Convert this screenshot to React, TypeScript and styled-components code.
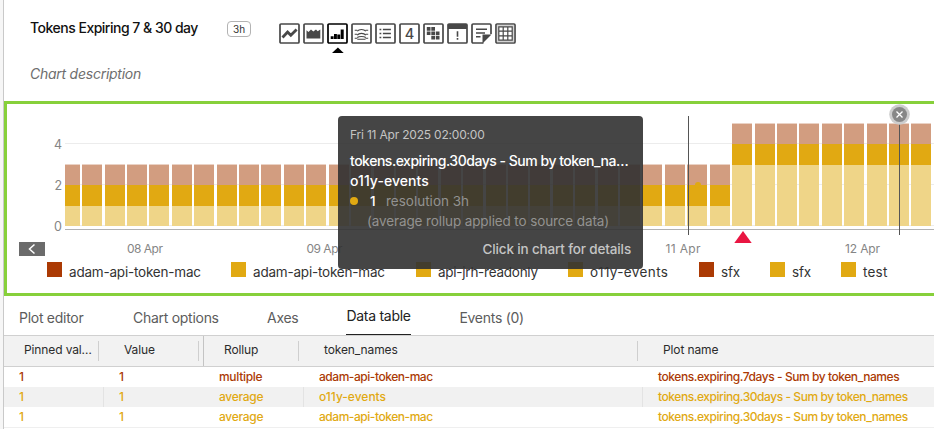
import React from "react";
import styled, { createGlobalStyle, css } from "styled-components";

const GOLD = "#e1a912";
const RUST = "#ab3a04";

const GlobalStyle = createGlobalStyle`
  * { box-sizing: border-box; }
  body { margin: 0; overflow: hidden; background: #fff; font-family: Inter, "Open Sans", sans-serif; }
`;

const Page = styled.div`
  width: 934px;
  height: 429px;
  overflow: hidden;
  padding-left: 3px;
  background: #f6f6f6;
`;

const Main = styled.main`
  height: 100%;
  display: flex;
  flex-direction: column;
  background: #fff;
  border-left: 1px solid #c9c9c9;
`;

const Header = styled.header`
  flex: 0 0 101px;
  padding: 18px 26px 0;
`;

const TitleRow = styled.div`
  display: flex;
  align-items: flex-start;
  height: 46px;
`;

const Title = styled.h1`
  margin: 0;
  width: 197px;
  font-size: 14px;
  line-height: 19px;
  font-weight: 500;
  letter-spacing: -0.5px;
  color: #111;
  white-space: nowrap;
`;

const Resolution = styled.span`
  width: 24px;
  height: 16px;
  margin-top: 3px;
  border: 1px solid #b3b3b3;
  border-radius: 4px;
  font-size: 10px;
  line-height: 15px;
  text-align: center;
  color: #333;
`;

const ChartTypes = styled.div`
  display: flex;
  gap: 3px;
  margin: 5px 0 0 28px;
`;

const TypeButton = styled.button<{ $active?: boolean }>`
  width: 21px;
  height: 31px;
  padding: 0;
  border: 0;
  background: none;
  font-family: Inter, sans-serif;
  color: ${(p) => (p.$active ? "#000" : "#484848")};
  svg { display: block; }
`;

const Description = styled.p`
  margin: 0;
  font-size: 14px;
  line-height: 20px;
  font-style: italic;
  letter-spacing: -0.25px;
  color: #6e6e6e;
`;

const ChartPanel = styled.section`
  position: relative;
  flex: 0 0 195px;
  border: 3px solid #87d03b;
  border-right: 0;
`;

const Plot = styled.svg`
  display: block;
  width: 927px;
  height: 156px;
  font-family: Inter, sans-serif;
`;

const Legend = styled.ul`
  display: flex;
  margin: 0;
  padding: 2px 0 0 40px;
  list-style: none;
`;

const LegendItem = styled.li<{ $w: number; $ls?: number }>`
  flex: 0 0 ${(p) => p.$w}px;
  display: flex;
  gap: 7px;
  font-size: 13.5px;
  line-height: 20px;
  letter-spacing: ${(p) => p.$ls ?? -0.2}px;
  color: #333;
  white-space: nowrap;
`;

const Swatch = styled.i<{ $c: string }>`
  width: 15px;
  height: 15px;
  background: ${(p) => p.$c};
`;

const Tooltip = styled.div`
  position: absolute;
  left: 331px;
  top: 12px;
  width: 305px;
  height: 153px;
  padding: 9px 12px;
  border-radius: 4px;
  background: rgba(49, 49, 49, 0.9);
  color: #fff;
  white-space: nowrap;
`;

const TipTime = styled.div`
  font-size: 12px;
  line-height: 20px;
  letter-spacing: -0.2px;
  color: #c4c4c4;
`;

const TipName = styled.div<{ $ls: number }>`
  font-size: 14px;
  line-height: 20px;
  font-weight: 500;
  letter-spacing: ${(p) => p.$ls}px;
`;

const TipNames = styled.div`
  margin-top: 6px;
`;

const TipValue = styled.div`
  display: flex;
  align-items: center;
  font-size: 13.5px;
  line-height: 20px;
  color: #929292;
  b { width: 16px; margin-left: 12px; font-weight: 500; color: #fff; }
`;

const Dot = styled.i`
  width: 8px;
  height: 8px;
  border-radius: 50%;
  background: ${GOLD};
`;

const TipNote = styled.div`
  padding-left: 17px;
  font-size: 13.5px;
  line-height: 20px;
  letter-spacing: -0.12px;
  color: #929292;
`;

const TipHint = styled.div`
  margin-top: 8px;
  text-align: right;
  font-size: 13.5px;
  line-height: 20px;
  font-weight: 500;
  letter-spacing: -0.15px;
  color: #c4c4c4;
`;

const Tabs = styled.nav`
  flex: 0 0 40px;
  display: flex;
  padding-left: 15px;
  border-bottom: 1px solid #d0d0d0;
`;

const Tab = styled.button<{ $w: number; $gap: number; $active?: boolean }>`
  flex: 0 0 ${(p) => p.$w}px;
  margin-right: ${(p) => p.$gap}px;
  height: 39px;
  padding: 3px 0 0;
  border: 0;
  background: none;
  font: 400 14px/38px Inter, sans-serif;
  letter-spacing: -0.28px;
  text-align: left;
  white-space: nowrap;
  color: #5c5c5c;
  ${(p) => p.$active && css`
    padding-top: 2px;
    line-height: 36px;
    color: #222;
    border-bottom: 1px solid #222;
  `}
`;

const columns = "100px 100px 100px 339px 1fr";

const HeadRow = styled.div`
  flex: 0 0 31px;
  display: grid;
  grid-template-columns: ${columns};
  background: #f2f2f2;
  border-bottom: 1px solid #d0d0d0;
`;

const HeadCell = styled.div<{ $divider?: boolean; $group?: boolean }>`
  display: flex;
  margin: 0 5px 0 0;
  padding-left: 20px;
  height: 30px;
  font-size: 12px;
  line-height: 28px;
  letter-spacing: -0.12px;
  color: #2b2b2b;
  white-space: nowrap;
  ${(p) => p.$divider && css`
    &::after { content: ""; width: 1px; height: 20px; margin: 5px 0 0 auto; background: #cfcfcf; }
  `}
  ${(p) => p.$group && css`
    margin-right: 0;
    padding-right: 4px;
    border-right: 1px solid #c4c4c4;
  `}
`;

const DataRow = styled.div<{ $c: string; $shade?: boolean }>`
  flex: 0 0 20px;
  height: 20px;
  display: grid;
  grid-template-columns: ${columns};
  background: ${(p) => (p.$shade ? "#f1f1f1" : "#fff")};
  color: ${(p) => p.$c};
`;

const TableEnd = styled.div`
  flex: 0 0 1px;
  background: #efefef;
`;

const Cell = styled.div<{ $line?: boolean; $ls?: number }>`
  padding-left: 15px;
  height: 20px;
  font-size: 12px;
  line-height: 20px;
  font-weight: 500;
  letter-spacing: ${(p) => p.$ls ?? -0.3}px;
  white-space: nowrap;
  border-right: 1px solid ${(p) => (p.$line ? "#e3e3e3" : "transparent")};
`;

const icons: React.ReactNode[] = [
  <path d="M3.5 14.5 8.6 9l3.2 3.2 5.8-5.8" fill="none" stroke="currentColor" strokeWidth="2.8" />,
  <path d="M3.5 15.5V7.3l2 1.7L8 6.5l2.3 2 2.7-2 1.700 1.800L17.300 6.500v9z" fill="currentColor" />,
  <path d="M3.700 13.200h2.900v2.900H3.700zM7 11h2.900v5.100H7zM10.300 11.500h2.900v4.600h-2.900zM13.700 6.500h3v9.600h-3z" fill="currentColor" />,
  <path d="M3.700 7.200h2.600M3.700 11.300h2.600M3.700 15.300h2.600M14.500 7.200h2.700M14.500 11.300h2.700M14.500 15.300h2.700M6.300 8.300q1.200-1.800 4.200-1.800t4.200 1.800M6.300 12.200q1.200-1.800 4.200-1.800t4.200 1.800M6.300 14.500q1.200-1 4.200-1t4.200 1M6.300 16.200h8.200" fill="none" stroke="currentColor" strokeWidth="1.1" />,
  <path d="M4.500 6.500h1.800M4.500 10.500h1.800M4.500 14.500h1.800M7.900 6.500h8M7.900 10.500h8M7.900 14.500h8" stroke="currentColor" strokeWidth="1.300" />,
  <text x="10.500" y="15.500" textAnchor="middle" fontSize="14.500" fontWeight="500" fill="currentColor">4</text>,
  <path d="M3.800 4h3.700v3.700H3.800zM8.300 4H12v3.700H8.300zM3.800 8.400h3.700v3.700H3.800zM8.300 8.400H12v3.700H8.300zM12.800 8.400h3.700v3.700h-3.700zM8.300 12.800H12v3.700H8.300zM12.800 12.800h3.700v3.700h-3.700z" fill="currentColor" />,
  <path d="M1 1h19v5H1zM9.700 8.200h1.600v5.600H9.700zM9.700 15h1.600v1.700H9.700z" fill="currentColor" />,
  <path d="M5 6.200h11M5 10h9M5 13.800h4.500" fill="none" stroke="currentColor" strokeWidth="1.400" />,
  <>
    <path d="M1.900 1.900h17.200v17.200H1.900z" fill="#d4d4d4" />
    <path d="M3.800 3.800h13.400v13.400H3.800z" fill="#fff" />
    <path d="M3.800 3.800h13.400v13.400H3.800zM8.200 3.800v13.400M12.800 3.800v13.400M3.800 8.200h13.400M3.800 12.800h13.400" fill="none" stroke="currentColor" strokeWidth="1.200" />
  </>,
];

const ChartTypeIcon = ({ index }: { index: number }) => (
  <svg width="21" height="31" viewBox="0 0 21 31">
    {index === 8 ? (
      <>
        <path d="M12.500 20H2.200Q1 20 1 18.800V2.200Q1 1 2.200 1h16.600Q20 1 20 2.200V11" fill="none" stroke="currentColor" strokeWidth="1.700" />
        <path d="M11.500 20.500V11.500h9z" fill="currentColor" />
      </>
    ) : (
      <rect x="1" y="1" width="19" height="19" rx="1" fill="none" stroke="currentColor" strokeWidth="1.700" />
    )}
    {icons[index]}
    {index === 2 && <path d="M10.900 24.500 16.700 30H5z" fill="currentColor" />}
  </svg>
);

const bars = Array.from({ length: 39 }, (_, i) => {
  const x = i === 0 ? 65 : Math.floor(82.7 + 22.41 * (i - 1));
  return { x, w: i === 0 ? 15 : 20, base: i >= 30 ? 3 : 1 };
});
const level = [226, 206, 185, 165, 144, 124];

const dates = [
  { x: 127, label: "08 Apr", w: 36 },
  { x: 306.5, label: "09 Apr", w: 36 },
  { x: 486, label: "10 Apr", w: 35 },
  { x: 665.5, label: "11 Apr", w: 35 },
  { x: 845, label: "12 Apr", w: 35 },
];

const PlotArea = () => (
  <Plot viewBox="7 104 927 156">
    <path d="M65 143.5H934M65 184.5H934M65 225.5H934" stroke="#ececec" />
    {bars.map(({ x, w, base }) => (
      <g key={x}>
        <rect x={x} y={level[base + 2] - 1} width={w} height="1" fill="#ead2c5" />
        <rect x={x} y={level[base + 2]} width={w} height={level[base + 1] - level[base + 2]} fill="#d29d80" />
        <rect x={x} y={level[base + 1]} width={w} height={level[base] - level[base + 1]} fill={GOLD} />
        <rect x={x} y={level[base]} width={w} height={level[0] - level[base]} fill="#efd588" />
      </g>
    ))}
    <path d="M65 229.5H934" stroke="#b2b2b2" />
    <circle cx="698" cy="185" r="3" fill={GOLD} />
    <path d="M688.5 116v119M899.5 120v115" stroke="#555" />
    <circle cx="899.5" cy="114.5" r="10.3" fill="#cdcdcd" />
    <circle cx="899.5" cy="114.5" r="7.5" fill="#878787" />
    <path d="m896.5 111.5 6 6m0-6-6 6" stroke="#fff" strokeWidth="1.3" />
    <path d="M743 231l8.700 12h-17.400z" fill="#e91642" />
    <g fontSize="12.5" fill="#858585" textAnchor="end">
      <text x="62" y="149">4</text>
      <text x="62" y="190">2</text>
      <text x="62" y="231">0</text>
    </g>
    <g fontSize="12" fill="#858585">
      {dates.map((d) => (
        <text key={d.label} x={d.x} y="253" textLength={d.w}>{d.label}</text>
      ))}
    </g>
    <path d="M19 242h26v14H19z" fill="#6b6b6b" />
    <path d="m34.500 244.500-5 4.500 5 4.500" fill="none" stroke="#fff" strokeWidth="1.500" />
  </Plot>
);

const series = [
  { label: "adam-api-token-mac", c: RUST, w: 184 },
  { label: "adam-api-token-mac", c: GOLD, w: 185 },
  { label: "api-jrh-readonly", c: GOLD, w: 152, ls: -0.25 },
  { label: "o11y-events", c: GOLD, w: 131, ls: 0.38 },
  { label: "sfx", c: RUST, w: 71 },
  { label: "sfx", c: GOLD, w: 71 },
  { label: "test", c: GOLD, w: 71, ls: 0.2 },
];

const rows = [
  { c: RUST, rollup: "multiple", token: "adam-api-token-mac", ls: -0.46, plot: "tokens.expiring.7days - Sum by token_names" },
  { c: GOLD, rollup: "average", token: "o11y-events", ls: 0, plot: "tokens.expiring.30days - Sum by token_names" },
  { c: GOLD, rollup: "average", token: "adam-api-token-mac", ls: -0.46, plot: "tokens.expiring.30days - Sum by token_names" },
];

export default function App() {
  return (
    <Page>
      <GlobalStyle />
      <Main>
        <Header>
          <TitleRow>
            <Title>Tokens Expiring 7 &amp; 30 day</Title>
            <Resolution>3h</Resolution>
            <ChartTypes>
              {icons.map((_, i) => (
                <TypeButton key={i} $active={i === 2}>
                  <ChartTypeIcon index={i} />
                </TypeButton>
              ))}
            </ChartTypes>
          </TitleRow>
          <Description>Chart description</Description>
        </Header>
        <ChartPanel>
          <PlotArea />
          <Legend>
            {series.map((s, i) => (
              <LegendItem key={i} $w={s.w} $ls={s.ls}>
                <Swatch $c={s.c} />
                {s.label}
              </LegendItem>
            ))}
          </Legend>
          <Tooltip>
            <TipTime>Fri 11 Apr 2025 02:00:00</TipTime>
            <TipNames>
              <TipName $ls={-0.48}>tokens.expiring.30days - Sum by token_na…</TipName>
              <TipName $ls={0.05}>o11y-events</TipName>
            </TipNames>
            <TipValue>
              <Dot />
              <b>1</b>
              resolution 3h
            </TipValue>
            <TipNote>(average rollup applied to source data)</TipNote>
            <TipHint>Click in chart for details</TipHint>
          </Tooltip>
        </ChartPanel>
        <Tabs>
          <Tab $w={66} $gap={48}>Plot editor</Tab>
          <Tab $w={86} $gap={48}>Chart options</Tab>
          <Tab $w={31} $gap={48}>Axes</Tab>
          <Tab $w={65} $gap={48} $active>Data table</Tab>
          <Tab $w={64} $gap={0}>Events (0)</Tab>
        </Tabs>
        <HeadRow>
          <HeadCell $divider>Pinned val…</HeadCell>
          <HeadCell $divider $group>Value</HeadCell>
          <HeadCell $divider>Rollup</HeadCell>
          <HeadCell $divider>token_names</HeadCell>
          <HeadCell>Plot name</HeadCell>
        </HeadRow>
        {rows.map((r, i) => (
          <DataRow key={i} $c={r.c} $shade={i === 1}>
            <Cell $line={i === 1}>1</Cell>
            <Cell>1</Cell>
            <Cell $line={i === 1}>{r.rollup}</Cell>
            <Cell $line={i === 1} $ls={r.ls}>{r.token}</Cell>
            <Cell $ls={-0.44}>{r.plot}</Cell>
          </DataRow>
        ))}
        <TableEnd />
      </Main>
    </Page>
  );
}
